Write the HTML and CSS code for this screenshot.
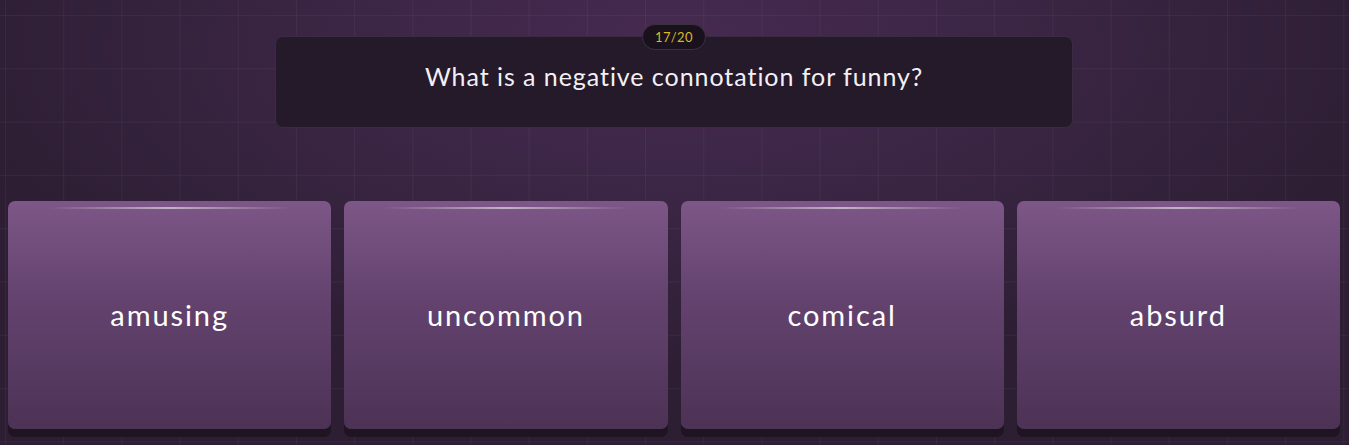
FILE: index.html
```html
<!DOCTYPE html>
<html lang="en">
<head>
<meta charset="utf-8">
<title>Quiz</title>
<link rel="stylesheet" href="styles.css">
</head>
<body>
<main class="stage">
  <section class="question-wrap">
    <div class="question">
      <span class="counter">17/20</span>
      <p class="question-text">What is a negative connotation for funny?</p>
    </div>
  </section>
  <section class="answers">
    <button class="answer"><span>amusing</span></button>
    <button class="answer"><span>uncommon</span></button>
    <button class="answer"><span>comical</span></button>
    <button class="answer"><span>absurd</span></button>
  </section>
</main>
</body>
</html>
```
FILE: styles.css
```css
html, body {
  margin: 0;
  padding: 0;
  height: 100%;
}
body {
  font-family: "Lato", "Noto Sans", sans-serif;
  color: #fff;
  background-color: #311f38;
  background-image:
    linear-gradient(rgba(255,255,255,0.045) 1px, transparent 1px),
    linear-gradient(90deg, rgba(255,255,255,0.045) 1px, transparent 1px),
    radial-gradient(ellipse 55% 75% at 50% 10%, #472a51 0%, #3b2645 45%, #2d1e33 100%);
  background-size: 58.2px 53.3px, 58.2px 53.3px, 100% 100%;
  background-position: 5px 15px, 5px 15px, 0 0;
  overflow: hidden;
}
.stage {
  display: flex;
  flex-direction: column;
  align-items: stretch;
  padding: 36px 9px 0 8px;
  box-sizing: border-box;
  height: 445px;
}
.question-wrap {
  display: flex;
  justify-content: center;
}
.question {
  position: relative;
  width: 798px;
  height: 92px;
  box-sizing: border-box;
  background: #241a29;
  border: 1px solid #3a2c40;
  border-radius: 8px;
  display: flex;
  justify-content: center;
  padding-top: 23px;
}
.counter {
  position: absolute;
  top: -13px;
  left: 50%;
  transform: translateX(-50%);
  width: 64px;
  height: 26px;
  box-sizing: border-box;
  border-radius: 13px;
  background: #19121c;
  border: 1px solid #3c3040;
  color: #d8b928;
  font-size: 13px;
  letter-spacing: 0.4px;
  display: flex;
  align-items: center;
  justify-content: center;
}
.question-text {
  margin: 0;
  font-size: 25px;
  line-height: 32px;
  letter-spacing: 0.95px;
  color: #f4eff6;
}
.answers {
  display: flex;
  gap: 13px;
  margin-top: 73px;
}
.answer {
  position: relative;
  flex: 1;
  height: 228px;
  border: none;
  border-radius: 7px;
  background: linear-gradient(180deg, #7d5787 0%, #654470 40%, #4c3255 100%);
  box-shadow: 0 8px 0 #1f1422;
  color: #fff;
  font-family: inherit;
  font-size: 29px;
  letter-spacing: 1.9px;
  display: flex;
  align-items: center;
  justify-content: center;
  padding: 0 0 2px 0;
}
.answer::before {
  content: "";
  position: absolute;
  top: 6px;
  left: 12%;
  right: 12%;
  height: 2px;
  background: linear-gradient(90deg, rgba(255,255,255,0) 0%, rgba(255,255,255,0.55) 50%, rgba(255,255,255,0) 100%);
}
```
